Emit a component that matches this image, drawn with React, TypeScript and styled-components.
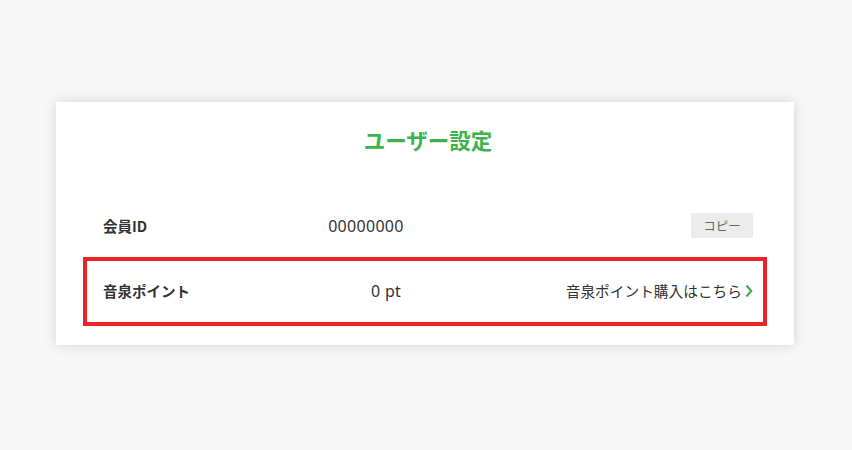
import React from "react";
import styled, { createGlobalStyle } from "styled-components";

const GlobalStyle = createGlobalStyle`
  html, body {
    margin: 0;
    padding: 0;
    background: #f7f7f7;
  }
  body {
    font-family: "Noto Sans", "Noto Sans CJK JP", sans-serif;
    color: #333;
  }
`;

const Page = styled.div`
  padding: 102px 58px 40px 56px;
`;

const Card = styled.section`
  width: 738px;
  box-sizing: border-box;
  background: #fff;
  box-shadow: 0 0 12px rgba(0, 0, 0, 0.14);
  padding: 22px 41px 22px 47px;
`;

const Title = styled.h1`
  margin: 0 0 38px;
  text-align: center;
  font-family: "Noto Sans CJK JP", sans-serif;
  font-size: 21.5px;
  font-weight: 700;
  line-height: 31px;
  color: #3cb34a;
`;

const Row = styled.div<{ $highlight?: boolean }>`
  position: relative;
  display: flex;
  align-items: center;
  height: 65px;

  ${(p) =>
    p.$highlight &&
    `
    &::after {
      content: "";
      position: absolute;
      left: -20px;
      right: -14px;
      top: -1px;
      bottom: -3px;
      border: 4px solid #ec2227;
      pointer-events: none;
    }
  `}
`;

const Label = styled.div`
  font-family: "Noto Sans CJK JP", sans-serif;
  font-size: 14.5px;
  font-weight: 700;
  color: #333;
`;

const Value = styled.div`
  margin-left: 181px;
  font-family: "Noto Sans", "Noto Sans CJK JP", sans-serif;
  font-size: 16px;
  letter-spacing: 0.3px;
  color: #333;
`;

const CopyButton = styled.button`
  margin-left: auto;
  width: 62px;
  height: 25px;
  border: none;
  border-radius: 2px;
  background: #ececec;
  color: #666;
  font-family: "Noto Sans CJK JP", sans-serif;
  font-size: 12.5px;
  padding: 0;
  cursor: pointer;
`;

const BuyLink = styled.a`
  margin-left: auto;
  display: flex;
  align-items: center;
  gap: 3px;
  font-family: "Noto Sans CJK JP", sans-serif;
  font-size: 14.7px;
  color: #333;
  text-decoration: none;
  cursor: pointer;
`;

const Chevron = () => (
  <svg width="8" height="14" viewBox="0 0 8 14" aria-hidden="true">
    <path d="M1.5 1.5 L6.2 7 L1.5 12.5" fill="none" stroke="#3cb34a" strokeWidth="2.2" />
  </svg>
);

export default function App() {
  return (
    <>
      <GlobalStyle />
      <Page>
        <Card>
          <Title>ユーザー設定</Title>
          <Row>
            <Label>会員ID</Label>
            <Value>00000000</Value>
            <CopyButton>コピー</CopyButton>
          </Row>
          <Row $highlight>
            <Label>音泉ポイント</Label>
            <Value>0 pt</Value>
            <BuyLink>
              音泉ポイント購入はこちら
              <Chevron />
            </BuyLink>
          </Row>
        </Card>
      </Page>
    </>
  );
}
